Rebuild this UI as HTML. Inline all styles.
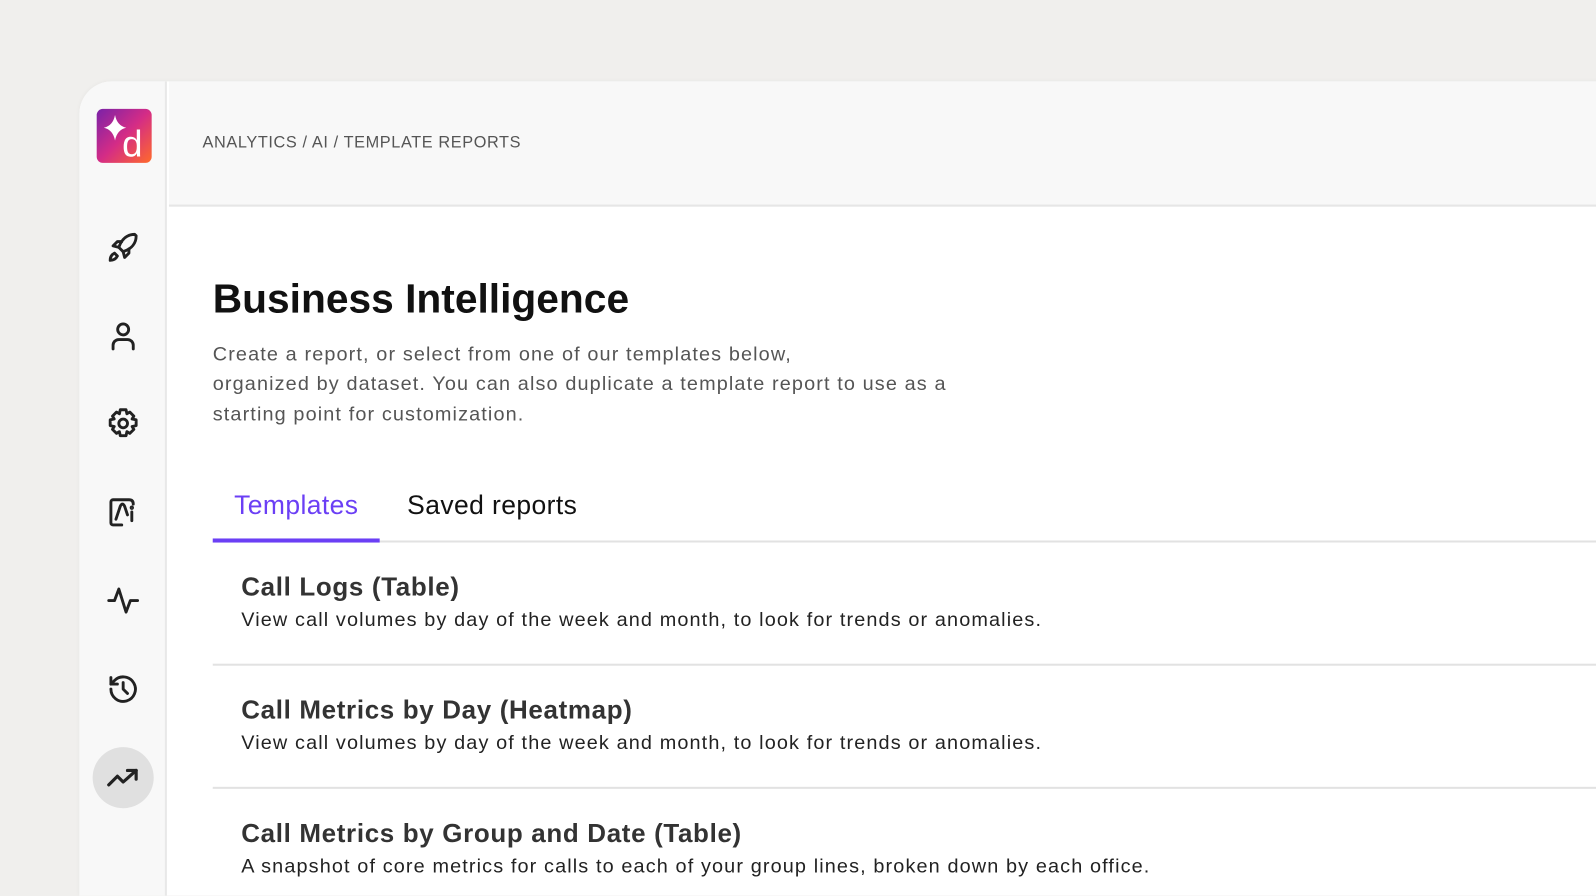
<!DOCTYPE html>
<html style="overflow:hidden;width:1596px;height:896px"><head><meta charset="utf-8"><style>
*{margin:0;padding:0;box-sizing:border-box}
body{width:1596px;height:896px;overflow:hidden;background:#f0efed;font-family:"Liberation Sans",sans-serif;position:relative}
#w{position:absolute;left:0;top:0;width:1568px;height:880px;overflow:hidden;transform:scale(1.0179);transform-origin:0 0}
.card{position:absolute;left:78px;top:80px;width:1560px;height:800px;background:#fff;border-radius:32px 0 0 0;overflow:hidden;box-shadow:0 0 4px rgba(0,0,0,.04)}
.side{position:absolute;left:0;top:0;width:86px;height:100%;background:#f8f8f8;border-right:2px solid #e8e8e8}
.hdr{position:absolute;left:88px;top:0;right:0;height:123px;background:#f8f8f8;border-bottom:2px solid #e6e6e6}
.crumb{position:absolute;left:121px;top:52px;font-size:16px;color:#555;letter-spacing:.6px}
.logo{position:absolute;left:17px;top:27px;width:54px;height:53px;border-radius:6px;background:linear-gradient(135deg,#7a22a8 0%,#d42c86 50%,#ff6a2a 100%)}
.ic{position:absolute;left:26px;width:34px;height:34px}
.act{position:absolute;left:13px;top:654px;width:60px;height:60px;border-radius:50%;background:#e0e0e0}
h1{position:absolute;left:209px;top:272px;font-size:40px;font-weight:700;color:#111}
.p{position:absolute;left:209px;top:334px;font-size:19.5px;line-height:29.3px;color:#555;letter-spacing:1.1px;white-space:nowrap}
.tab{position:absolute;top:481px;font-size:26px;letter-spacing:.4px}
.item{position:absolute;left:237px}
.item b{display:block;font-size:25.5px;color:#333;letter-spacing:.65px}
.item span{display:block;font-size:19.5px;color:#222;margin-top:6px;letter-spacing:1.1px;white-space:nowrap}
.line{position:absolute;left:209px;right:0;height:2px;background:#e2e2e2}
</style></head><body><div id="w">
<div class="card">
<div class="side">
<div class="logo"><svg width="54" height="53" viewBox="0 0 54 53"><path d="M18 6 Q20 16.5 29 18.5 Q20 20.5 18 31 Q16 20.5 7 18.5 Q16 16.5 18 6Z" fill="#fff"/><text x="25" y="47" font-family="Liberation Sans" font-size="36" fill="#fff">d</text></svg></div>
<svg class="ic" style="top:146px" viewBox="0 0 24 24" fill="none" stroke="#222" stroke-width="2" stroke-linecap="round" stroke-linejoin="round"><path d="M20 3c-5 0-9 3-11 9l3 3c6-2 9-6 9-11z"/><path d="M9 12l-4-1 3-3h3M12 15l1 4 3-3v-3"/><path d="M6 16c-2 1-3 3-3 5 2 0 4-1 5-3z"/></svg>
<svg class="ic" style="top:233px" viewBox="0 0 24 24" fill="none" stroke="#222" stroke-width="2" stroke-linecap="round"><circle cx="12" cy="7.5" r="3.8"/><path d="M5 21v-2.5a4 4 0 0 1 4-4h6a4 4 0 0 1 4 4V21"/></svg>
<svg class="ic" style="top:319px" viewBox="0 0 24 24" fill="none" stroke="#222" stroke-width="2" stroke-linejoin="round"><path d="M10 2.5h4l.6 2.8 2-1.2 2.8 2.8-1.2 2 2.8.6v4l-2.8.6 1.2 2-2.8 2.8-2-1.2-.6 2.8h-4l-.6-2.8-2 1.2-2.8-2.8 1.2-2-2.8-.6v-4l2.8-.6-1.2-2 2.8-2.8 2 1.2z"/><circle cx="12" cy="12" r="3"/></svg>
<svg class="ic" style="top:406px" viewBox="0 0 24 24" fill="none" stroke="#222" stroke-width="2" stroke-linecap="round"><path d="M11 21H5a1.5 1.5 0 0 1-1.5-1.5V5A1.5 1.5 0 0 1 5 3.5h11c2 0 3 1 3 3"/><path d="M7 17l3-9c1-2 2-2 3 0l2 6"/><path d="M18 12v6"/><circle cx="18" cy="9" r=".5" fill="#222"/></svg>
<svg class="ic" style="top:493px" viewBox="0 0 24 24" fill="none" stroke="#222" stroke-width="2" stroke-linecap="round" stroke-linejoin="round"><path d="M2 12h4l3-8 5 16 3-8h5"/></svg>
<svg class="ic" style="top:580px" viewBox="0 0 24 24" fill="none" stroke="#222" stroke-width="2" stroke-linecap="round" stroke-linejoin="round"><path d="M3.5 12a8.5 8.5 0 1 0 2.5-6L3.5 8.5"/><path d="M3.5 4v4.5H8"/><path d="M12 7.5V12l3 3"/></svg>
<div class="act"></div>
<svg class="ic" style="top:667px" viewBox="0 0 24 24" fill="none" stroke="#222" stroke-width="2.2" stroke-linecap="round" stroke-linejoin="round"><path d="M2 17l6-6 4 4 9-8"/><path d="M15 7h6v6"/></svg>
</div>
<div class="hdr"></div>
<div class="crumb">ANALYTICS / AI / TEMPLATE REPORTS</div>
</div>
<h1>Business Intelligence</h1>
<div class="p">Create a report, or select from one of our templates below,<br>organized by dataset. You can also duplicate a template report to use as a<br>starting point for customization.</div>
<div class="tab" style="left:230px;color:#6b3ff5">Templates</div>
<div class="tab" style="left:400px;color:#111">Saved reports</div>
<div class="line" style="top:531px"></div>
<div style="position:absolute;left:209px;top:529px;width:164px;height:4px;background:#6b3ff5"></div>
<div class="item" style="top:563px"><b>Call Logs (Table)</b><span>View call volumes by day of the week and month, to look for trends or anomalies.</span></div>
<div class="line" style="top:652px"></div>
<div class="item" style="top:684px"><b>Call Metrics by Day (Heatmap)</b><span>View call volumes by day of the week and month, to look for trends or anomalies.</span></div>
<div class="line" style="top:773px"></div>
<div class="item" style="top:805px"><b>Call Metrics by Group and Date (Table)</b><span>A snapshot of core metrics for calls to each of your group lines, broken down by each office.</span></div>
</div></body></html>
